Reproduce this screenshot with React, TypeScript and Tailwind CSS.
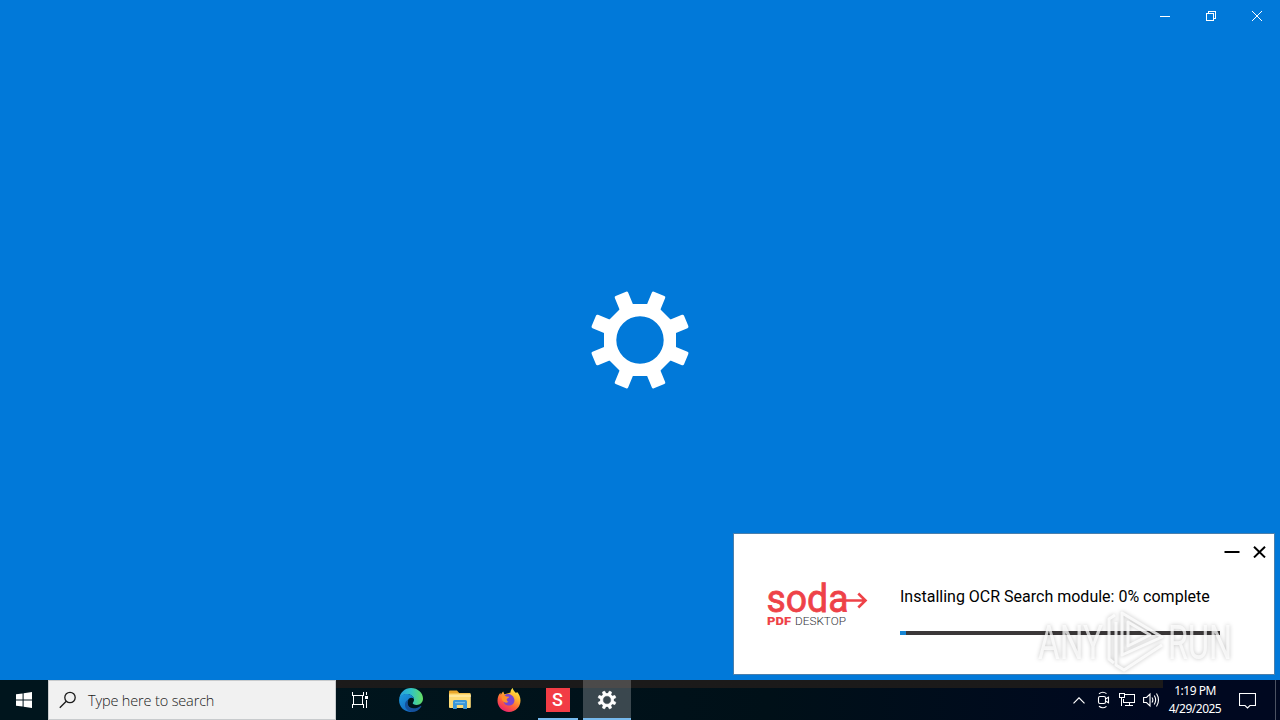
import type { ReactNode } from 'react';

const TEETH = [22.5, 67.5, 112.5, 157.5, 202.5, 247.5, 292.5, 337.5];

function Gear({ className }: { className: string }) {
  return (
    <svg viewBox="-50 -50 100 100" className={className} fill="white">
      {TEETH.map(angle => (
        <path key={angle} transform={`rotate(${angle})`} d="M-7.2 -32 L-7.2 -48.4 Q-7.2 -50 -5.6 -50 H5.6 Q7.2 -50 7.2 -48.4 L7.2 -32 Z" />
      ))}
      <path
        fillRule="evenodd"
        d="M-15 -36 H15 L36 -15 V15 L15 36 H-15 L-36 15 V-15 Z M0 -23.7 A23.7 23.7 0 1 0 0 23.7 A23.7 23.7 0 1 0 0 -23.7 Z"
      />
    </svg>
  );
}

function TitleBar() {
  return (
    <div className="flex h-8 justify-end">
      <div className="flex w-[46px] items-center justify-center">
        <svg width="10" height="10" stroke="white" shapeRendering="crispEdges"><path d="M0 5.5H10" /></svg>
      </div>
      <div className="flex w-[46px] items-center justify-center">
        <svg width="10" height="10" stroke="white" fill="none" shapeRendering="crispEdges">
          <path d="M0.5 2.5H7.5V9.5H0.5Z M2.5 2V0.5H9.5V7.5H8" />
        </svg>
      </div>
      <div className="flex w-[46px] items-center justify-center">
        <svg width="10" height="10" stroke="white"><path d="M0 0L10 10M10 0L0 10" /></svg>
      </div>
    </div>
  );
}

function SodaLogo() {
  return (
    <svg width="104" height="50" viewBox="764 579 104 50" className="shrink-0 overflow-visible">
      <text x="766.5" y="611.5" fontFamily="Roboto, sans-serif" fontSize="39.5" textLength="82" lengthAdjust="spacingAndGlyphs" fill="#ee4248" stroke="#ee4248" strokeWidth="0.8">soda</text>
      <path d="M834 600.5H866M858.3 593.5L865.5 600.5L858.3 607.5" fill="none" stroke="#ee4248" strokeWidth="2.6" />
      <text x="767" y="625.3" fontFamily="Roboto, sans-serif" fontSize="11.5" fontWeight="900" textLength="24" lengthAdjust="spacingAndGlyphs" fill="#ee4248">PDF</text>
      <text x="795" y="625.3" fontFamily="Roboto, sans-serif" fontSize="11.5" fontWeight="300" textLength="51" lengthAdjust="spacingAndGlyphs" fill="#33333a">DESKTOP</text>
    </svg>
  );
}

function InstallerPopup() {
  return (
    <div className="absolute left-[733px] top-[533px] flex h-[142px] w-[542px] flex-col border border-[#4a7fac] bg-white">
      <div className="flex h-9 shrink-0 items-center justify-end gap-[13px] pr-2">
        <svg width="16" height="14" stroke="black" strokeWidth="2"><path d="M0.5 7H15.5" /></svg>
        <svg width="13" height="12" stroke="black" strokeWidth="2"><path d="M1 0.8L12 11.4M12 0.8L1 11.4" /></svg>
      </div>
      <div className="flex pl-[30px]">
        <div className="pt-[9px]"><SodaLogo /></div>
        <div className="ml-[32px] pt-[15px]">
          <p className="h-6 whitespace-nowrap font-['Roboto',sans-serif] text-[16px] leading-6 text-black">
            Installing OCR Search module: 0% complete
          </p>
          <div className="mt-[22px] h-1 w-80 bg-[#3b3839]">
            <div className="h-1 w-[6px] bg-[#1584d2]" />
          </div>
        </div>
      </div>
    </div>
  );
}

function Watermark() {
  return (
    <svg className="absolute left-[1030px] top-[604px] overflow-visible drop-shadow-[0_0_2px_rgba(0,0,0,0.3)]" width="210" height="74" viewBox="1030 604 210 74">
      <g fill="white" fillOpacity="0.75" fontFamily="Roboto, sans-serif" fontSize="49" fontWeight="400">
        <text x="1038" y="659" textLength="65" lengthAdjust="spacingAndGlyphs">ANY</text>
        <text x="1168" y="659" textLength="64" lengthAdjust="spacingAndGlyphs">RUN</text>
      </g>
      <g fill="none" stroke="white" strokeOpacity="0.8" strokeWidth="3" strokeLinejoin="round">
        <path d="M1122 613V655L1162 637Z" />
        <path d="M1128 622V646L1150 635Z" />
        <path d="M1115 615L1109 619V659L1114 663" />
        <path d="M1116 622V665L1124 670L1162 645" />
      </g>
    </svg>
  );
}

function TaskIcon({ children, underline, active }: { children: ReactNode; underline?: boolean; active?: boolean }) {
  return (
    <div className={active ? 'flex w-12 flex-col items-center bg-[#3a474e] bg-linear-to-b from-[#4b4a4a] from-[8px] to-[#3a474e] to-[8px]' : 'flex w-[49px] flex-col items-center'}>
      <div className="flex h-[38px] items-center pt-[2px]">{children}</div>
      {underline && <div className={active ? 'h-[2px] w-12 bg-[#76b9ed]' : 'h-[2px] w-10 bg-[#76b9ed]'} />}
    </div>
  );
}

function EdgeIcon() {
  return (
    <svg width="24" height="24" viewBox="0 0 24 24">
      <defs>
        <linearGradient id="edgeTop" x1="0" y1="0.5" x2="1" y2="0.5">
          <stop offset="0" stopColor="#269ee0" />
          <stop offset="0.5" stopColor="#31c3c5" />
          <stop offset="1" stopColor="#65df62" />
        </linearGradient>
        <linearGradient id="edgeLeft" x1="0" y1="0" x2="0.7" y2="1">
          <stop offset="0" stopColor="#1c9bdd" />
          <stop offset="1" stopColor="#1266bf" />
        </linearGradient>
      </defs>
      <path d="M0.3 11C0.8 4.7 5.7 0 12 0C19 0 24 5 24 10.6C24 14.5 21 17 17.8 17C15 17 13.7 15.9 13.7 15.1C13.7 14.5 15 13.9 15 11.7C15 8.3 11.7 6.3 8 6.3C4.2 6.3 1.4 8 0.3 11Z" fill="url(#edgeTop)" />
      <path d="M0.2 11C1 7.8 4 6 7.6 6C11.6 6 14.6 8.2 15 11C13 8.6 8.8 9.8 8.4 14.2C8 18.8 12 22 16.6 21C14.9 23 13.3 24 11 23.9C4.6 23.5 -0.7 18 0.2 11Z" fill="url(#edgeLeft)" />
      <path d="M9.5 11.5C7 16 9.6 20.3 14.7 20.3C17.3 20.3 19.6 19.4 21.5 18C22.1 17.6 22.6 18.1 22.2 18.7C20.1 22 16.8 24 13 24C8.7 23.3 5.6 20.1 6 16C6.2 13.8 7.7 12.1 9.5 11.5Z" fill="#15519c" />
    </svg>
  );
}

function FolderIcon() {
  return (
    <svg width="22" height="20" viewBox="0 0 22 20">
      <path d="M0 1.5Q0 0.5 1 0.5H8L10.2 3H21V8H0Z" fill="#e9a72b" />
      <path d="M0 3.5H21.8V17Q21.8 18 20.8 18H1Q0 18 0 17Z" fill="#fddb75" />
      <path d="M0 5H21.8V7H0Z" fill="#ffe79a" />
      <path d="M4 19V11.5Q4 10 5.5 10H16.5Q18 10 18 11.5V19H14.2V15H7.8V19Z" fill="#3a97d8" />
      <path d="M6 12H16V13.2H6Z" fill="#75bce9" />
    </svg>
  );
}

function FirefoxIcon() {
  return (
    <svg width="24" height="24" viewBox="0 0 24 24">
      <defs>
        <linearGradient id="foxBody" x1="0.8" y1="0" x2="0.25" y2="1">
          <stop offset="0" stopColor="#fff044" />
          <stop offset="0.35" stopColor="#ffb02e" />
          <stop offset="0.65" stopColor="#ff603a" />
          <stop offset="1" stopColor="#e81c73" />
        </linearGradient>
      </defs>
      <path d="M13.5 4.5C13.4 2.6 14.5 0.8 15.8 0C15.9 2.4 17.7 3.4 19 5L20.1 4C22.2 6.2 23.5 9.2 23.5 12.5C23.5 18.8 18.5 24 12 24C5.6 24 0.5 19 0.5 12.8C0.5 9.2 1.8 6.4 3.4 4.7L3.8 6.8C4.5 5.7 5.1 4.3 6.2 3.4L7.4 6.3Z" fill="url(#foxBody)" />
      <path d="M8 7C10.5 5 15.8 6.3 17.1 10.5C18.4 14.7 15.4 17.5 11.8 17.5C8.4 17.5 6.5 15.2 6.5 12.5C6.5 10.4 7.3 8.3 8 7Z" fill="#7a45d0" />
      <path d="M4.5 8.3C6 7.2 8 7.3 9.4 8.4L12.2 8.8C12.1 10 10.4 10.4 9.8 11.1C9.3 12.6 10.5 13.6 11.5 13.8C9.8 15.2 7.6 15 6.2 13.6C4.9 12.2 4.6 10.4 4.5 8.3Z" fill="#ff9128" />
    </svg>
  );
}

function Taskbar() {
  return (
    <div className="flex h-10 shrink-0 bg-linear-to-r from-[#00151d] from-25% via-[#001018] via-60% to-[#000820] to-90% font-['Noto_Sans',sans-serif]">
      <div className="flex w-12 items-center justify-center">
        <svg width="16" height="16" fill="white">
          <path d="M0 2.3L6.6 1.4V7.5H0Z M7.6 1.2L16 0V7.5H7.6Z M0 8.5H6.6V14.6L0 13.7Z M7.6 8.5H16V16L7.6 14.8Z" />
        </svg>
      </div>
      <div className="flex w-72 items-center border border-[#c8cbcd] bg-[#f1f1f1] pl-[11px]">
        <svg width="18" height="18" fill="none" stroke="#1b1b1b" strokeWidth="1.3" className="-ml-px">
          <circle cx="11" cy="6.5" r="5.2" />
          <path d="M7.3 10.2L0.8 16.7" />
        </svg>
        <span className="ml-[11px] whitespace-nowrap pt-px font-['Open_Sans',sans-serif] text-[14.5px] font-[350] tracking-[-0.15px] text-[#1a1a1a]">Type here to search</span>
      </div>
      <div className="flex w-[827px] bg-linear-to-b from-[#1b1a1a] from-[8px] to-transparent to-[8px]">
        <div className="flex w-[50px] items-center justify-center pr-[2px]">
          <svg width="17" height="16" fill="none" stroke="white" strokeWidth="1" shapeRendering="crispEdges">
            <path d="M0.5 0V3.5H11.5V0M0.5 16V12.5H11.5V16M1.5 3.5V12.5M10.5 3.5V12.5M14.5 0V3M14.5 8V16" />
            <path d="M13 4H16V7H13Z" fill="white" stroke="none" />
          </svg>
        </div>
        <TaskIcon><EdgeIcon /></TaskIcon>
        <TaskIcon><FolderIcon /></TaskIcon>
        <TaskIcon><FirefoxIcon /></TaskIcon>
        <TaskIcon underline>
          <div className="flex h-6 w-6 items-center justify-center bg-[#f23c45] font-['Roboto',sans-serif] text-[18px] font-medium leading-none text-white">S</div>
        </TaskIcon>
        <div className="w-px" />
        <TaskIcon active underline><Gear className="h-[18px] w-[18px] overflow-visible stroke-white stroke-[4]" /></TaskIcon>
        <div className="flex flex-1 items-center justify-end gap-[9px] pr-[3px]">
          <svg width="12" height="7" fill="none" stroke="white" strokeWidth="1.2"><path d="M0.5 6.3L6 0.8L11.5 6.3" /></svg>
          <svg width="14" height="18" fill="none" stroke="white" strokeWidth="1.1" className="ml-[2px]">
            <path d="M3 2.7Q7 -0.2 10.5 2.7M3 15.3Q7 18.2 10.5 15.3" />
            <rect x="2.5" y="5.5" width="7" height="7" rx="1.5" />
            <path d="M9.5 8L12.5 6.3V11.7L9.5 10" />
          </svg>
          <svg width="17" height="16" fill="none" stroke="white" shapeRendering="crispEdges">
            <path d="M6 2.5H15.5V10.5H4.5V7M10.5 10.5V13.5M6 13.5H14M0.5 1.5H5.5V5.5H0.5ZM2.5 5.5V13.5" />
          </svg>
          <svg width="17" height="16" fill="none" stroke="white" strokeWidth="1.1" className="-ml-[2px]">
            <path d="M0.6 5.5H3.5L7 2V14L3.5 10.5H0.6ZM9 5.5Q10.7 8 9 10.5M11.3 3.5Q14 8 11.3 12.5M13.5 1.5Q17.5 8 13.5 14.5" />
          </svg>
        </div>
      </div>
      <div className="flex w-16 flex-col items-center pt-[2px] text-[12px] leading-[18px] tracking-[-0.5px] text-white">
        <span>1:19 PM</span>
        <span>4/29/2025</span>
      </div>
      <div className="flex w-10 items-center justify-center">
        <svg width="17" height="17" fill="none" stroke="white" strokeWidth="1.1"><path d="M0.5 1.5H16.5V13.5H11L8.5 16L6 13.5H0.5Z" /></svg>
      </div>
      <div className="ml-2 w-px bg-[#4b5262]" />
    </div>
  );
}

export default function App() {
  return (
    <div className="relative flex h-[720px] w-[1280px] flex-col overflow-hidden bg-[#0179d9]">
      <TitleBar />
      <div className="flex flex-1 items-center justify-center pb-8">
        <Gear className="h-[100px] w-[100px]" />
      </div>
      <InstallerPopup />
      <Taskbar />
      <Watermark />
    </div>
  );
}
